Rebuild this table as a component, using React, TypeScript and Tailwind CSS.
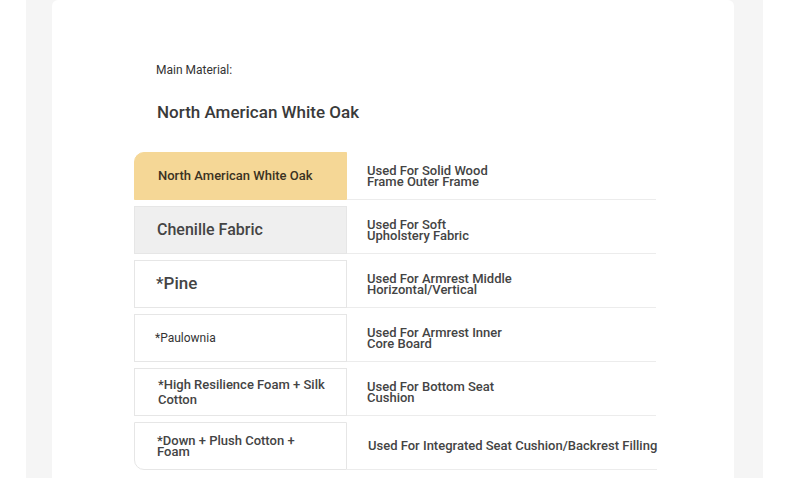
const rows = [
  {
    name: "North American White Oak",
    use: ["Used For Solid Wood", "Frame Outer Frame"],
    cell: "bg-[#f5d796] border-[#f5d796] rounded-tl-[10px] text-[13px] font-medium text-[#3b3222] pl-[23px]",
  },
  {
    name: "Chenille Fabric",
    use: ["Used For Soft", "Upholstery Fabric"],
    cell: "bg-[#efefef] border-[#e6e6e6] text-[16px] font-medium text-[#444] pl-[22px]",
  },
  {
    name: "*Pine",
    use: ["Used For Armrest Middle", "Horizontal/Vertical"],
    cell: "bg-white border-[#e6e6e6] text-[17px] font-medium text-[#444] pl-[21px]",
  },
  {
    name: "*Paulownia",
    use: ["Used For Armrest Inner", "Core Board"],
    cell: "bg-white border-[#e6e6e6] text-[12px] text-[#333] pl-[20px]",
  },
  {
    name: "*High Resilience Foam + Silk Cotton",
    use: ["Used For Bottom Seat", "Cushion"],
    cell: "bg-white border-[#e6e6e6] text-[13px] font-medium leading-[15px] text-[#444] pl-[23px] pr-[16px]",
  },
  {
    name: "*Down + Plush Cotton + Foam",
    use: ["Used For Integrated Seat Cushion/Backrest Filling"],
    cell: "bg-white border-[#e6e6e6] rounded-bl-[10px] text-[13px] font-medium leading-[11px] text-[#444] pl-[22px] pr-[40px]",
  },
]

export default function App() {
  return (
    <div className="h-[478px] overflow-hidden bg-white pl-[26px] pr-[27px] font-['Roboto',sans-serif]">
      <div className="h-full bg-[#f5f5f5] pl-[26px] pr-[29px]">
        <div className="h-full rounded-t-[6px] bg-white pl-[82px]">
          <div className="pl-[22px] pt-[62px]">
            <p className="text-[12px] leading-[16px] text-[#333]">Main Material:</p>
            <h2 className="mt-[24px] pl-px text-[17px] font-medium leading-[20px] text-[#3a3a3a]">
              North American White Oak
            </h2>
          </div>

          <div className="mt-[30px] flex w-[522px] flex-col gap-[6px]">
            {rows.map((row) => (
              <div key={row.name} className="flex h-[48px]">
                <div className={`flex w-[213px] shrink-0 items-center border ${row.cell}`}>
                  <span>{row.name}</span>
                </div>
                <div className="flex flex-1 items-center border-b border-[#ececec] pl-[20px] text-[13px] font-medium leading-[11px] text-[#444]">
                  <span className={row.use.length === 1 ? "pl-px" : ""}>
                    {row.use.map((line, i) => (
                      <span key={i} className="block whitespace-nowrap">
                        {line}
                      </span>
                    ))}
                  </span>
                </div>
              </div>
            ))}
          </div>
        </div>
      </div>
    </div>
  )
}
